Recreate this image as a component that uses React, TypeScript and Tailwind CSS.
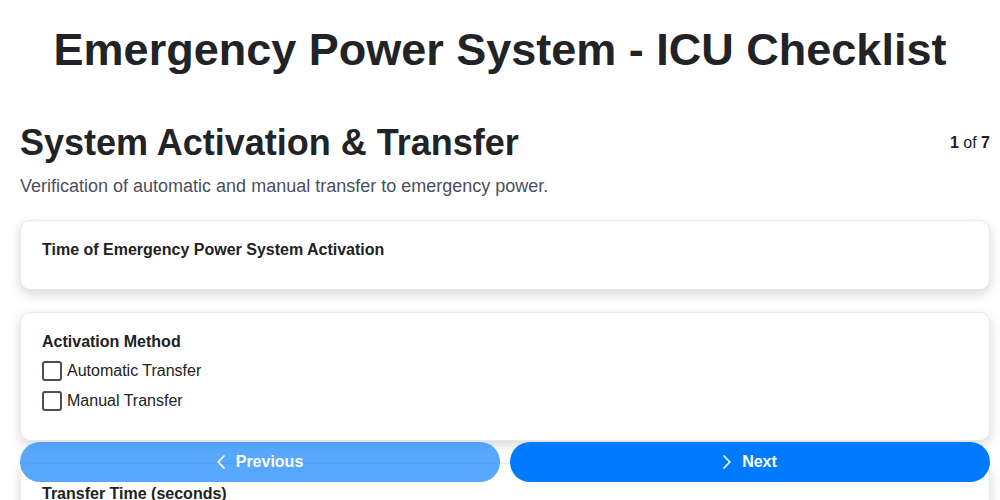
const font = { fontFamily: '"Liberation Sans", Arial, sans-serif' };

const Chevron = ({ dir }: { dir: "left" | "right" }) => (
  <svg width="8" height="14" viewBox="0 0 8 14" fill="none" className="shrink-0">
    <polyline
      points={dir === "left" ? "7,1 1.2,7 7,13" : "1,1 6.8,7 1,13"}
      stroke="white"
      strokeWidth="1.7"
      strokeLinecap="round"
      strokeLinejoin="round"
    />
  </svg>
);

const Checkbox = ({ label }: { label: string }) => (
  <label className="flex items-center gap-[5px] h-[30px] text-[16px] text-[#222]">
    <span className="w-[20px] h-[20px] border-2 border-[#4a4d5a] rounded-[3px] bg-white" />
    {label}
  </label>
);

const Card = ({ children, className }: { children: React.ReactNode; className?: string }) => (
  <div
    className={
      "bg-white border border-[#e6e6ec] rounded-[10px] shadow-[0_4px_12px_rgba(0,0,0,0.16)] px-[21px] " +
      (className ?? "")
    }
  >
    {children}
  </div>
);

export default function App() {
  return (
    <div style={font} className="relative bg-white h-[500px] overflow-hidden text-[#202124]">
      <h1 className="text-[45px] font-bold text-center leading-[54px] pt-[23px] text-[#222326]">
        Emergency Power System - ICU Checklist
      </h1>

      <div className="pl-5 pr-[10px]">
        <div className="flex items-start justify-between mt-[44px]">
          <h2 className="text-[36px] font-bold leading-[43px] text-[#222326]">
            System Activation &amp; Transfer
          </h2>
          <div className="text-[16px] leading-[20px] mt-[12px] text-[#222]">
            <span className="font-bold">1</span> of <span className="font-bold">7</span>
          </div>
        </div>
        <p className="text-[18px] leading-[27px] text-[#4b4f5c] mt-[9px]">
          Verification of automatic and manual transfer to emergency power.
        </p>

        <div className="flex flex-col gap-[22px] mt-[20px]">
          <Card className="h-[70px] pt-[19px]">
            <div className="text-[16px] font-bold leading-[20px] text-[#222]">
              Time of Emergency Power System Activation
            </div>
          </Card>

          <Card className="h-[129px] pt-[19px]">
            <div className="text-[16px] font-bold leading-[20px] mb-[4px] text-[#222]">
              Activation Method
            </div>
            <Checkbox label="Automatic Transfer" />
            <Checkbox label="Manual Transfer" />
          </Card>

          <Card className="h-[130px] pt-[20px]">
            <div className="text-[16px] font-bold leading-[20px] text-[#222]">
              Transfer Time (seconds)
            </div>
          </Card>
        </div>
      </div>

      <div className="absolute left-5 right-[10px] bottom-[18px] flex gap-[10px]">
        <button className="flex-1 h-[40px] rounded-[20px] bg-[#007bff] opacity-65 text-white text-[16px] font-bold flex items-center justify-center gap-[11px]">
          <Chevron dir="left" />
          Previous
        </button>
        <button className="flex-1 h-[40px] rounded-[20px] bg-[#007bff] text-white text-[16px] font-bold flex items-center justify-center gap-[11px]">
          <Chevron dir="right" />
          Next
        </button>
      </div>
    </div>
  );
}
